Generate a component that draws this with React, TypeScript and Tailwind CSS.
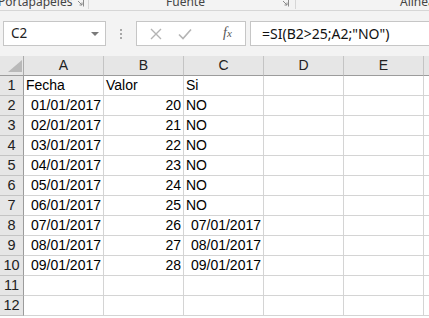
import React from "react";

const cols = ["A", "B", "C", "D", "E", ""];

type Cell = { t: string; align?: "l" | "r"; pad?: string };

const rows: Cell[][] = [
  [{ t: "Fecha" }, { t: "Valor" }, { t: "Si" }],
  ...[
    ["01/01/2017", "20", "NO"],
    ["02/01/2017", "21", "NO"],
    ["03/01/2017", "22", "NO"],
    ["04/01/2017", "23", "NO"],
    ["05/01/2017", "24", "NO"],
    ["06/01/2017", "25", "NO"],
    ["07/01/2017", "26", "07/01/2017"],
    ["08/01/2017", "27", "08/01/2017"],
    ["09/01/2017", "28", "09/01/2017"],
  ].map((r) => [
    { t: r[0], align: "r" as const },
    { t: r[1], align: "r" as const },
    { t: r[2], align: r[2] === "NO" ? ("l" as const) : ("r" as const) },
  ]),
  [],
  [],
];

function Launcher() {
  return (
    <svg width="8" height="8" viewBox="0 0 8 8" className="shrink-0">
      <path d="M0.5 0.5 H7.5 V7.5" fill="none" stroke="#8a8a8a" strokeWidth="1" />
      <path d="M2 2 L6 6 M3.5 6 H6 V3.5" fill="none" stroke="#8a8a8a" strokeWidth="1" />
    </svg>
  );
}

export default function App() {
  return (
    <div
      className="w-[429px] h-[318px] overflow-hidden bg-white"
      style={{ fontFamily: "'Liberation Sans', Arial, sans-serif" }}
    >
      {/* ribbon bottom */}
      <div
        className="h-[11px] bg-[#f3f3f3] border-b border-[#d6d6d6] flex overflow-hidden text-[12px] text-[#444]"
        style={{ fontFamily: "'Noto Sans', 'Open Sans', sans-serif" }}
      >
        <div className="w-[89px] shrink-0 border-r border-[#d6d6d6] flex items-start h-[9px] relative">
          <span className="leading-[12px] -mt-[4px] -ml-[2px] whitespace-nowrap">Portapapeles</span>
          <div className="absolute left-[76px] -top-[1px]"><Launcher /></div>
        </div>
        <div className="w-[207px] shrink-0 border-r border-[#d6d6d6] flex items-start h-[9px] relative">
          <span className="leading-[12px] -mt-[4px] ml-[77px] whitespace-nowrap">Fuente</span>
          <div className="absolute right-[6px] -top-[1px]"><Launcher /></div>
        </div>
        <div className="flex-1 flex items-start h-[9px]">
          <span className="leading-[12px] -mt-[4px] ml-[104px] whitespace-nowrap">Alineación</span>
        </div>
      </div>

      {/* formula bar */}
      <div className="h-[45px] bg-[#f3f3f3] flex items-center pl-[3px]">
        <div className="w-[103px] h-[25px] bg-white border border-[#c6c6c6] flex items-center pl-[7px] pr-[6px] shrink-0">
          <span
            className="text-[13.5px] text-[#222] flex-1"
            style={{ fontFamily: "'Noto Sans', 'Open Sans', sans-serif" }}
          >
            C2
          </span>
          <svg width="8" height="4" viewBox="0 0 8 4">
            <path d="M0 0 H8 L4 4 Z" fill="#7a7a7a" />
          </svg>
        </div>
        <div className="w-[30px] flex flex-col items-center gap-[2px] shrink-0">
          <div className="w-[2px] h-[2px] bg-[#a8a8a8]" />
          <div className="w-[2px] h-[2px] bg-[#a8a8a8]" />
          <div className="w-[2px] h-[2px] bg-[#a8a8a8]" />
        </div>
        <div className="w-[110px] h-[25px] bg-white border border-[#c6c6c6] flex items-center shrink-0 relative">
          <svg width="12" height="12" viewBox="0 0 12 12" className="absolute left-[13px] top-[6px]">
            <path d="M1 1 L11 11 M11 1 L1 11" stroke="#b4b4b4" strokeWidth="1.4" fill="none" />
          </svg>
          <svg width="14" height="12" viewBox="0 0 14 12" className="absolute left-[41px] top-[6px]">
            <path d="M1 6.5 L5 10.5 L13 1.5" stroke="#b4b4b4" strokeWidth="1.6" fill="none" />
          </svg>
          <span
            className="absolute left-[86px] top-[2px] italic text-[#555] text-[14px] leading-[18px]"
            style={{ fontFamily: "'Liberation Serif', 'Times New Roman', serif" }}
          >
            f<span className="text-[11px]">x</span>
          </span>
        </div>
        <div className="ml-[4px] flex-1 h-[25px] bg-white border border-r-0 border-[#c6c6c6] flex items-center pl-[11px]">
          <span
            className="text-[14px] text-[#111] whitespace-nowrap"
            style={{ fontFamily: "'Noto Sans', 'Open Sans', sans-serif" }}
          >
            =SI(B2&gt;25;A2;"NO")
          </span>
        </div>
      </div>

      {/* grid */}
      <div className="grid grid-cols-[24px_80px_80px_80px_80px_80px_80px] text-[14px] text-black">
        {/* header row */}
        <div className="h-[20px] bg-[#e6e6e6] border-r border-b border-[#ababab] border-b-[#9c9c9c] relative">
          <svg width="14" height="12" viewBox="0 0 14 12" className="absolute left-[8px] top-[4px]">
            <path d="M14 0 L14 12 L0 12 Z" fill="#b9b9b9" />
          </svg>
        </div>
        {cols.map((c, i) => (
          <div
            key={i}
            className="h-[20px] bg-[#e6e6e6] border-r border-[#c4c4c4] border-b border-b-[#9c9c9c] flex items-center justify-center text-[#222]"
          >
            {c}
          </div>
        ))}
        {rows.map((r, ri) => (
          <React.Fragment key={ri}>
            <div className="h-[20px] bg-[#e6e6e6] border-r border-r-[#9c9c9c] border-b border-b-[#c4c4c4] flex items-center justify-center text-[#222] text-[14.5px]">
              {ri + 1}
            </div>
            {[0, 1, 2, 3, 4, 5].map((ci) => {
              const cell = r[ci];
              return (
                <div
                  key={ci}
                  className={
                    "h-[20px] border-r border-b border-[#d4d4d4] flex items-end pb-[1px] px-[2px] leading-[17px] whitespace-nowrap overflow-visible " +
                    (cell && cell.align === "r" ? "justify-end" : "justify-start")
                  }
                >
                  {cell ? cell.t : ""}
                </div>
              );
            })}
          </React.Fragment>
        ))}
      </div>
    </div>
  );
}
